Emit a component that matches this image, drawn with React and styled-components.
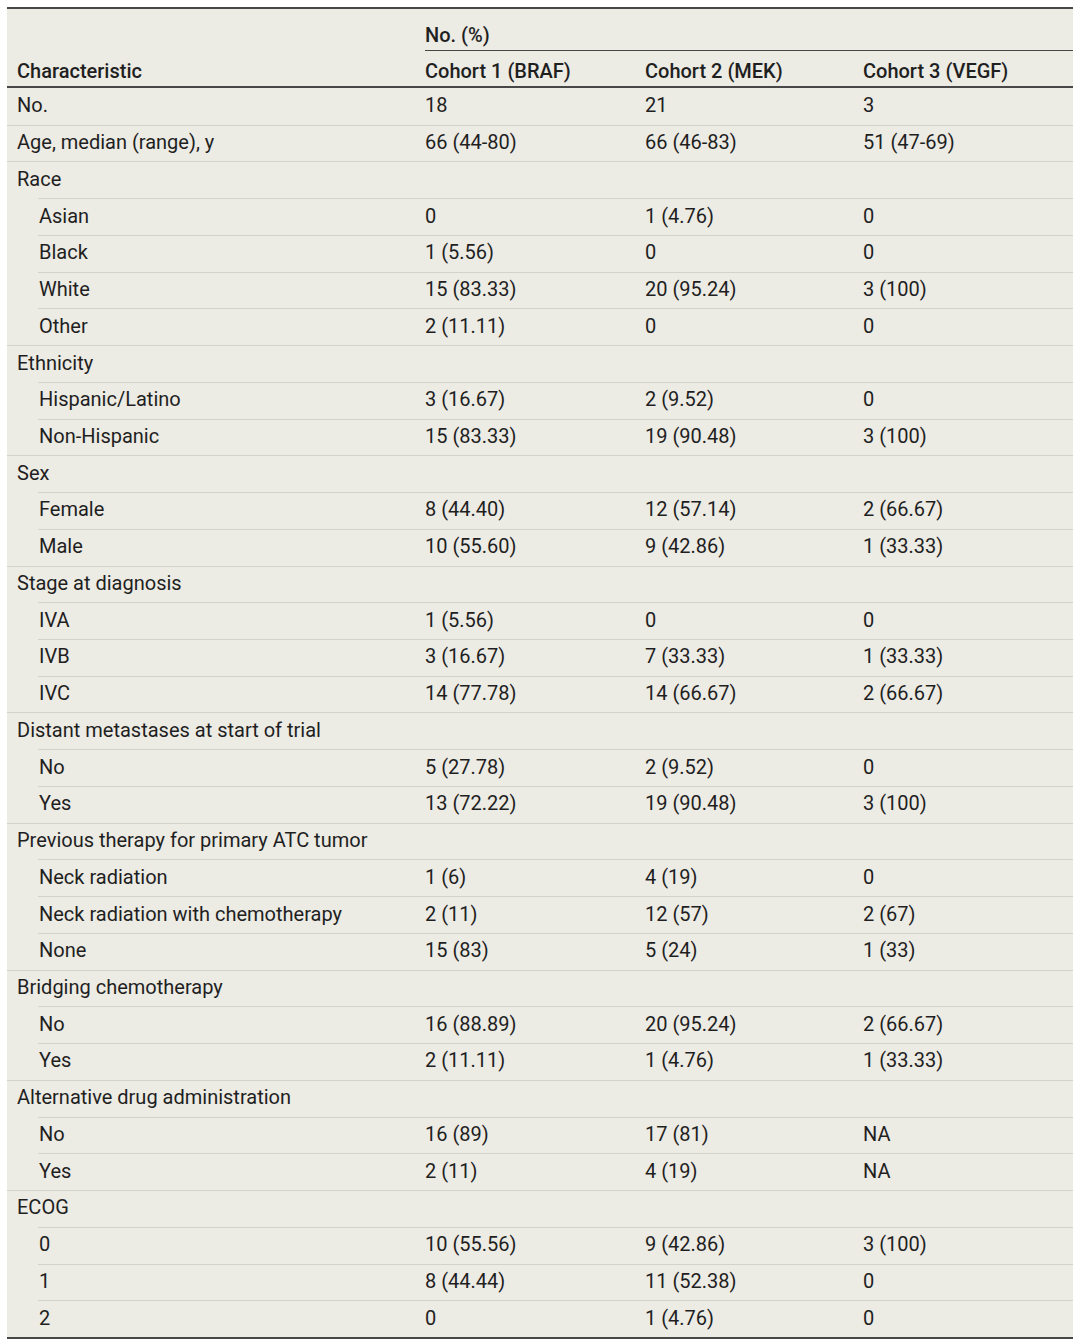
import React from "react";
import styled, { createGlobalStyle } from "styled-components";

const Global = createGlobalStyle`
  html, body { margin: 0; padding: 0; background: #ffffff; }
  body { font-family: Roboto, "Noto Sans", "Liberation Sans", sans-serif; color: #1f1f1f; }
`;

const Page = styled.div`
  padding: 7px 7px 0 7px;
`;

const Table = styled.div`
  width: 1066px;
  background: #ecebe4;
  border-top: 2px solid #474747;
  border-bottom: 2px solid #474747;
  font-size: 20px;
`;

const COLS = "408px 220px 218px 1fr";

const Head = styled.div`
  display: grid;
  grid-template-columns: ${COLS};
  grid-template-rows: 42px 35px;
  border-bottom: 2px solid #474747;
  font-weight: 500;
`;

const HeadLabel = styled.div`
  grid-column: ${(p) => p.$col};
  grid-row: ${(p) => p.$row};
  align-self: end;
  padding: 0 10px 3px;
  line-height: 24px;
  white-space: nowrap;
`;

const Spanner = styled.div`
  grid-column: 2 / 5;
  grid-row: 1;
  margin-left: 10px;
  border-bottom: 1px solid #474747;
  display: flex;
  align-items: flex-end;
  line-height: 24px;
  padding-bottom: 3px;
`;

const Row = styled.div`
  display: grid;
  grid-template-columns: ${(p) => (p.$indent ? "377px 220px 218px 1fr" : COLS)};
  margin-left: ${(p) => (p.$indent ? "31px" : "0")};
  height: 36.74px;
  box-sizing: border-box;
  border-top: ${(p) => (p.$first ? "none" : "1px solid #d3d2cb")};
  align-items: center;
`;

const Cell = styled.div`
  padding-left: ${(p) => (p.$label && p.$indent ? "1px" : "10px")};
  padding-bottom: 3px;
  white-space: nowrap;
  line-height: 24px;
`;

const rows = [
  ["No.", "18", "21", "3"],
  ["Age, median (range), y", "66 (44-80)", "66 (46-83)", "51 (47-69)"],
  ["Race"],
  ["Asian", "0", "1 (4.76)", "0", 1],
  ["Black", "1 (5.56)", "0", "0", 1],
  ["White", "15 (83.33)", "20 (95.24)", "3 (100)", 1],
  ["Other", "2 (11.11)", "0", "0", 1],
  ["Ethnicity"],
  ["Hispanic/Latino", "3 (16.67)", "2 (9.52)", "0", 1],
  ["Non-Hispanic", "15 (83.33)", "19 (90.48)", "3 (100)", 1],
  ["Sex"],
  ["Female", "8 (44.40)", "12 (57.14)", "2 (66.67)", 1],
  ["Male", "10 (55.60)", "9 (42.86)", "1 (33.33)", 1],
  ["Stage at diagnosis"],
  ["IVA", "1 (5.56)", "0", "0", 1],
  ["IVB", "3 (16.67)", "7 (33.33)", "1 (33.33)", 1],
  ["IVC", "14 (77.78)", "14 (66.67)", "2 (66.67)", 1],
  ["Distant metastases at start of trial"],
  ["No", "5 (27.78)", "2 (9.52)", "0", 1],
  ["Yes", "13 (72.22)", "19 (90.48)", "3 (100)", 1],
  ["Previous therapy for primary ATC tumor"],
  ["Neck radiation", "1 (6)", "4 (19)", "0", 1],
  ["Neck radiation with chemotherapy", "2 (11)", "12 (57)", "2 (67)", 1],
  ["None", "15 (83)", "5 (24)", "1 (33)", 1],
  ["Bridging chemotherapy"],
  ["No", "16 (88.89)", "20 (95.24)", "2 (66.67)", 1],
  ["Yes", "2 (11.11)", "1 (4.76)", "1 (33.33)", 1],
  ["Alternative drug administration"],
  ["No", "16 (89)", "17 (81)", "NA", 1],
  ["Yes", "2 (11)", "4 (19)", "NA", 1],
  ["ECOG"],
  ["0", "10 (55.56)", "9 (42.86)", "3 (100)", 1],
  ["1", "8 (44.44)", "11 (52.38)", "0", 1],
  ["2", "0", "1 (4.76)", "0", 1],
];

export default function App() {
  return (
    <Page>
      <Global />
      <Table>
        <Head>
          <HeadLabel $col="1" $row="1 / 3">Characteristic</HeadLabel>
          <Spanner>No. (%)</Spanner>
          <HeadLabel $col="2" $row="2">Cohort 1 (BRAF)</HeadLabel>
          <HeadLabel $col="3" $row="2">Cohort 2 (MEK)</HeadLabel>
          <HeadLabel $col="4" $row="2">Cohort 3 (VEGF)</HeadLabel>
        </Head>
        {rows.map(([label, a = "", b = "", c = "", indent], i) => (
          <Row key={i} $indent={!!indent} $first={i === 0}>
            <Cell $label $indent={!!indent}>{label}</Cell>
            <Cell>{a}</Cell>
            <Cell>{b}</Cell>
            <Cell>{c}</Cell>
          </Row>
        ))}
      </Table>
    </Page>
  );
}
